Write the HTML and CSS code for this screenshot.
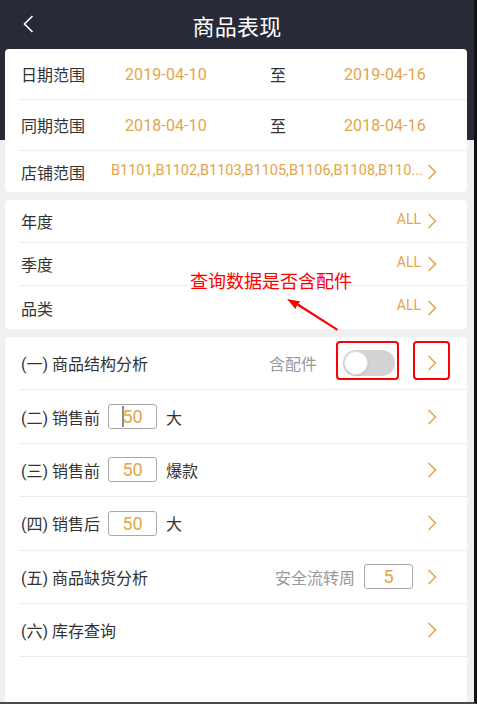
FILE: index.html
```html
<!DOCTYPE html>
<html lang="zh-CN">
<head>
<meta charset="utf-8">
<title>商品表现</title>
<link rel="stylesheet" href="styles.css">
</head>
<body>
<div class="screen">
  <header class="topbar">
    <div class="back">
      <svg width="11" height="18" viewBox="0 0 11 18"><polyline points="9.5,1 1.5,9 9.5,17" fill="none" stroke="#fff" stroke-width="1.6"/></svg>
    </div>
    <h1 class="title">商品表现</h1>
    <div></div>
  </header>

  <section class="card card-dates">
    <div class="row date-row r50">
      <span class="label">日期范围</span>
      <span class="val">2019-04-10</span>
      <span class="to">至</span>
      <span class="val">2019-04-16</span>
    </div>
    <div class="row date-row r50">
      <span class="label">同期范围</span>
      <span class="val">2018-04-10</span>
      <span class="to">至</span>
      <span class="val">2018-04-16</span>
    </div>
    <div class="row store-row last">
      <span class="label store-label">店铺范围</span>
      <span class="stores">B1101,B1102,B1103,B1105,B1106,B1108,B110...</span>
      <svg class="chev" width="10" height="16" viewBox="0 0 10 16"><polyline points="1.5,1 8.5,8 1.5,15" fill="none" stroke="#e3a54a" stroke-width="1.5"/></svg>
    </div>
  </section>

  <section class="card card-filters">
    <div class="row frow">
      <span class="label">年度</span>
      <span class="all">ALL</span>
      <svg class="chev" width="10" height="16" viewBox="0 0 10 16"><polyline points="1.5,1 8.5,8 1.5,15" fill="none" stroke="#e3a54a" stroke-width="1.5"/></svg>
    </div>
    <div class="row frow">
      <span class="label">季度</span>
      <span class="all">ALL</span>
      <svg class="chev" width="10" height="16" viewBox="0 0 10 16"><polyline points="1.5,1 8.5,8 1.5,15" fill="none" stroke="#e3a54a" stroke-width="1.5"/></svg>
    </div>
    <div class="row frow last">
      <span class="label">品类</span>
      <span class="all">ALL</span>
      <svg class="chev" width="10" height="16" viewBox="0 0 10 16"><polyline points="1.5,1 8.5,8 1.5,15" fill="none" stroke="#e3a54a" stroke-width="1.5"/></svg>
    </div>
  </section>

  <section class="card card-menu">
    <div class="row mrow">
      <span class="label">(一) 商品结构分析</span>
      <span class="hint">含配件</span>
      <span class="toggle"><span class="knob"></span></span>
      <svg class="chev chev-wide" width="10" height="16" viewBox="0 0 10 16"><polyline points="1.5,1 8.5,8 1.5,15" fill="none" stroke="#e3a54a" stroke-width="1.5"/></svg>
    </div>
    <div class="row mrow">
      <span class="label">(二) 销售前</span>
      <span class="num"><span class="caret"></span>50</span>
      <span class="unit">大</span>
      <svg class="chev" width="10" height="16" viewBox="0 0 10 16"><polyline points="1.5,1 8.5,8 1.5,15" fill="none" stroke="#e3a54a" stroke-width="1.5"/></svg>
    </div>
    <div class="row mrow">
      <span class="label">(三) 销售前</span>
      <span class="num">50</span>
      <span class="unit">爆款</span>
      <svg class="chev" width="10" height="16" viewBox="0 0 10 16"><polyline points="1.5,1 8.5,8 1.5,15" fill="none" stroke="#e3a54a" stroke-width="1.5"/></svg>
    </div>
    <div class="row mrow">
      <span class="label">(四) 销售后</span>
      <span class="num">50</span>
      <span class="unit">大</span>
      <svg class="chev" width="10" height="16" viewBox="0 0 10 16"><polyline points="1.5,1 8.5,8 1.5,15" fill="none" stroke="#e3a54a" stroke-width="1.5"/></svg>
    </div>
    <div class="row mrow">
      <span class="label">(五) 商品缺货分析</span>
      <span class="hint hint-week">安全流转周</span>
      <span class="num num-week">5</span>
      <svg class="chev chev-week" width="10" height="16" viewBox="0 0 10 16"><polyline points="1.5,1 8.5,8 1.5,15" fill="none" stroke="#e3a54a" stroke-width="1.5"/></svg>
    </div>
    <div class="row mrow">
      <span class="label">(六) 库存查询</span>
      <svg class="chev" width="10" height="16" viewBox="0 0 10 16"><polyline points="1.5,1 8.5,8 1.5,15" fill="none" stroke="#e3a54a" stroke-width="1.5"/></svg>
    </div>
  </section>

  <div class="note">查询数据是否含配件</div>
  <svg class="arrow" width="477" height="704" viewBox="0 0 477 704">
    <polygon points="287,299 300.5,301.5 298.4,303.4 338,329 337,330.8 297,305.5 295.5,309" fill="#f00"/>
  </svg>
  <div class="mark mark-toggle"></div>
  <div class="mark mark-chev"></div>
</div>
</body>
</html>
```
FILE: styles.css
```css
* { box-sizing: border-box; }
html, body { margin: 0; padding: 0; }
body {
  font-family: Roboto, "Noto Sans CJK SC", sans-serif;
  color: #333;
}
.screen {
  position: relative;
  width: 477px;
  height: 704px;
  overflow: hidden;
  display: flex;
  flex-direction: column;
  border-right: 3px solid #111;
  border-bottom: 2px solid #4a4a4a;
  background: linear-gradient(to bottom, #282a37 0, #282a37 140px, #f0f0f0 140px);
}
.topbar {
  height: 49px;
  flex: none;
  display: grid;
  grid-template-columns: 1fr auto 1fr;
  align-items: center;
}
.back { padding-left: 23px; padding-bottom: 2px; display: flex; }
.title {
  margin: 0;
  font-family: "Noto Sans CJK SC", sans-serif;
  font-weight: 400;
  font-size: 22px;
  color: #fff;
  line-height: 1;
  letter-spacing: 0.3px;
}
.card {
  flex: none;
  background: #fff;
  margin: 0 7px 0 5px;
  border-radius: 4px;
}
.card-filters, .card-menu { margin-top: 8px; }
.card-menu { flex: 1; border-radius: 4px 4px 0 0; }
.row {
  display: flex;
  align-items: center;
  margin-left: 15px;
  padding-left: 1px;
  padding-right: 30px;
  border-bottom: 1px solid #ececec;
}
.row.last { border-bottom: none; }
.label {
  font-size: 16px;
  color: #333;
  white-space: nowrap;
}
.date-row {
  display: grid;
  grid-template-columns: 104px 145px 74px 1fr;
}
.r50 { height: 51px; }
.val {
  font-size: 16px;
  color: #e3a54a;
  letter-spacing: 0.1px;
}
.to { font-size: 16px; color: #333; }
.store-row { height: 41px; }
.store-label { width: 90px; flex: none; }
.stores {
  flex: 1;
  font-size: 14.5px;
  color: #e3a54a;
  white-space: nowrap;
  overflow: hidden;
  padding-bottom: 2px;
}
.chev { flex: none; display: block; }
.store-row .chev { margin-left: 4px; }
.frow { height: 43px; }
.frow .label { flex: 1; }
.all {
  font-size: 14px;
  color: #e3a54a;
  margin-right: 6px;
  margin-bottom: 5px;
}
.mrow { height: 53.4px; }
.mrow .label { margin-right: auto; }
.mrow .chev { margin-left: auto; }
.hint { font-size: 16px; color: #999; }
.toggle {
  width: 52px;
  height: 26px;
  margin-left: 26px;
  margin-right: 32px;
  border-radius: 13px;
  background: #d3d3d3;
  display: flex;
  align-items: center;
  padding-left: 1px;
}
.knob {
  width: 24px;
  height: 24px;
  border-radius: 50%;
  background: #fff;
  border: 1px solid #e2e2e2;
  box-shadow: 0 1px 2px rgba(0,0,0,0.12);
}
.mrow .toggle + .chev { margin-left: 0; }
.num {
  position: relative;
  width: 49px;
  height: 25px;
  border: 1px solid #a9a9a9;
  border-radius: 3px;
  display: flex;
  align-items: center;
  justify-content: center;
  font-size: 18px;
  color: #e3a54a;
  margin-left: 8px;
}
.caret {
  position: absolute;
  left: 13px;
  top: 1px;
  bottom: 1px;
  width: 1.5px;
  background: #8a8a8a;
}
.unit {
  font-size: 16px;
  color: #333;
  margin-left: 9px;
  margin-right: auto;
}
.mrow .label:has(+ .num) { margin-right: 0; }
.hint-week { margin-right: 9px; }
.num-week { margin-left: 0; margin-right: 14px; }
.mrow .num-week + .chev { margin-left: 0; }
.note {
  position: absolute;
  left: 190px;
  top: 268px;
  font-family: "Noto Sans CJK SC", sans-serif;
  font-size: 18px;
  line-height: 24px;
  color: #f00;
  white-space: nowrap;
}
.arrow {
  position: absolute;
  left: 0;
  top: 0;
  pointer-events: none;
}
.mark {
  position: absolute;
  top: 341px;
  height: 39px;
  border: 2px solid #f00;
  border-radius: 4px;
}
.mark-toggle { left: 336px; width: 63px; }
.mark-chev { left: 413px; width: 37px; }
```
